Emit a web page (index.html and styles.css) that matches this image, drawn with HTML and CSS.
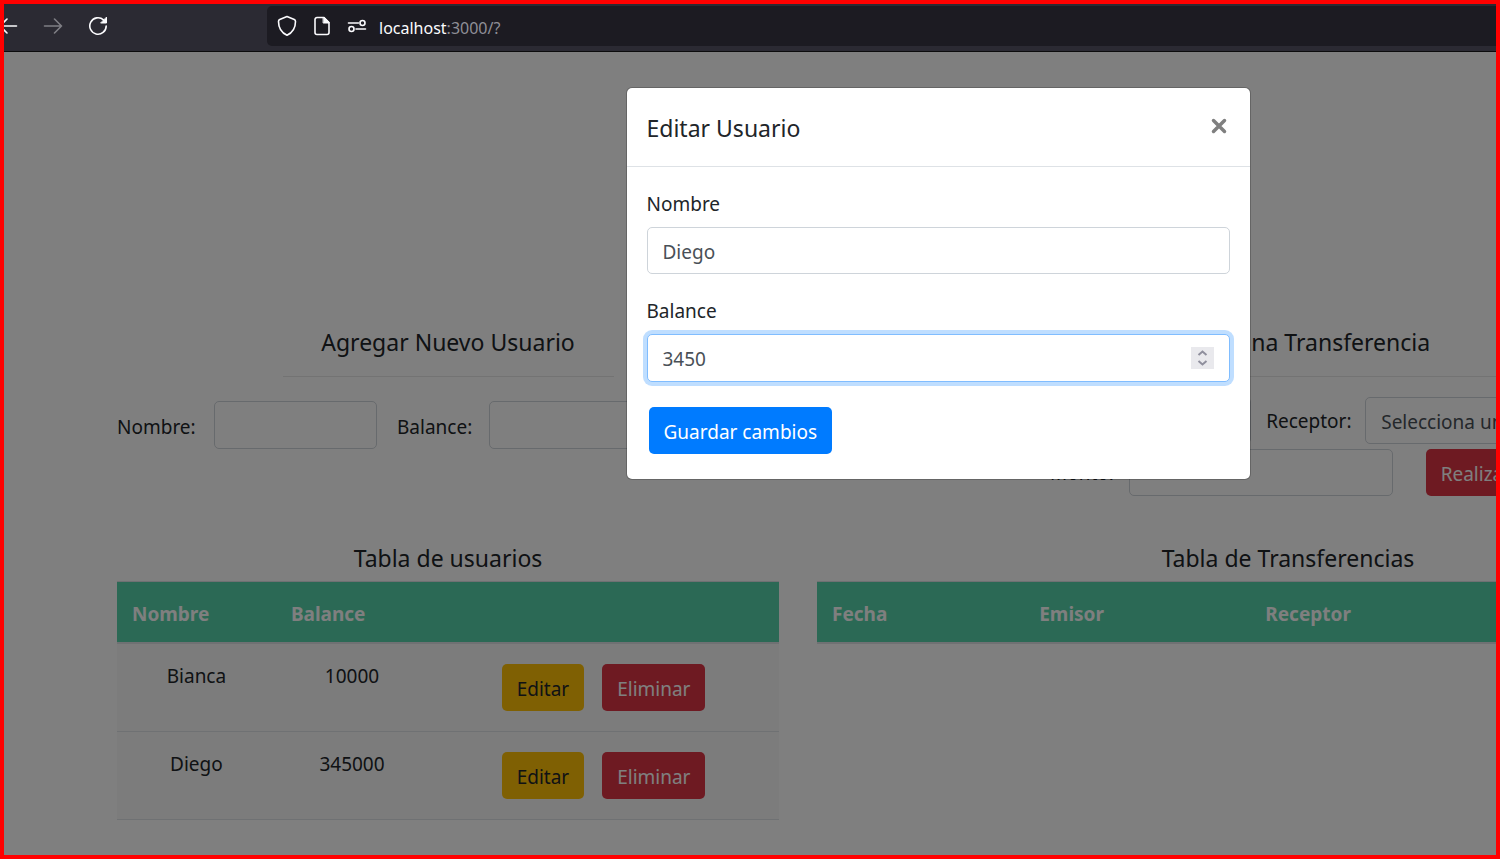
FILE: index.html
```html
<!DOCTYPE html>
<html lang="es">
<head>
<meta charset="utf-8">
<title>Usuarios y transferencias</title>
<link rel="stylesheet" href="styles.css">
</head>
<body>
<div class="window">
  <header class="toolbar">
    <nav class="nav-buttons" aria-label="Navegación">
      <button class="nav-button" type="button" aria-label="Atrás">
        <svg width="20" height="20" viewBox="0 0 20 20"><path d="M18.500 10H2M9 3l-7 7 7 7"/></svg>
      </button>
      <button class="nav-button nav-button-off" type="button" aria-label="Adelante" disabled>
        <svg width="20" height="20" viewBox="0 0 20 20"><path d="M1.500 10H18.500M11.500 3l7 7-7 7"/></svg>
      </button>
      <button class="nav-button" type="button" aria-label="Recargar">
        <svg width="20" height="20" viewBox="0 0 20 20"><path d="M18.200 10a8.200 8.200 0 1 1-2.700-6.100L17 5.500"/><path class="solid" d="M18.500 1.500v5.500h-5.500z"/></svg>
      </button>
    </nav>
    <div class="address">
      <svg width="20" height="22" viewBox="0 0 20 22"><path d="M10 1.500l7.300 3.100q1.200.5 1.200 1.800c0 6-2.700 11-8.500 13.900C4.200 17.400 1.500 12.400 1.500 6.400q0-1.300 1.200-1.800z"/></svg>
      <svg width="18" height="22" viewBox="0 0 18 22"><path d="M11 2.500H4A2 2 0 0 0 2 4.500v13a2 2 0 0 0 2 2h10a2 2 0 0 0 2-2V7.500z"/><path class="solid" d="M10.500 2.500h1L16 7v1h-5.500z"/></svg>
      <svg width="20" height="22" viewBox="0 0 20 22"><path d="M1.500 8h10M9 14h9.500"/><circle cx="15.500" cy="8" r="2.500"/><circle cx="4.500" cy="14" r="2.500"/></svg>
      <span class="url">localhost<span class="url-rest">:3000/?</span></span>
    </div>
  </header>

  <div class="viewport">
    <div class="page">
      <main class="content">
        <section>
          <h2 class="title">Agregar Nuevo Usuario</h2>
          <hr class="rule">
          <form class="user-form">
            <label for="nombre">Nombre:</label>
            <input class="field" id="nombre" type="text">
            <label for="balance">Balance:</label>
            <input class="field" id="balance" type="text">
          </form>
        </section>
        <section>
          <h2 class="title">Realizar una Transferencia</h2>
          <hr class="rule">
          <form class="transfer-form">
            <div class="transfer-row">
              <label for="emisor">Emisor:</label>
              <select class="field" id="emisor"><option>Selecciona un usuario</option></select>
              <label for="receptor">Receptor:</label>
              <select class="field" id="receptor"><option>Selecciona un usuario</option></select>
            </div>
            <div class="transfer-row transfer-row-amount">
              <label for="monto">Monto:</label>
              <input class="field" id="monto" type="text">
              <button class="btn btn-danger btn-transfer" type="button">Realizar</button>
            </div>
          </form>
        </section>
        <section>
          <h2 class="title table-title">Tabla de usuarios</h2>
          <table class="table">
            <colgroup><col class="col-name"><col class="col-balance"><col></colgroup>
            <thead>
              <tr><th>Nombre</th><th>Balance</th><th></th></tr>
            </thead>
            <tbody>
              <tr>
                <td>Bianca</td><td>10000</td>
                <td><div class="actions"><button class="btn btn-warning" type="button">Editar</button><button class="btn btn-danger" type="button">Eliminar</button></div></td>
              </tr>
              <tr>
                <td>Diego</td><td>345000</td>
                <td><div class="actions"><button class="btn btn-warning" type="button">Editar</button><button class="btn btn-danger" type="button">Eliminar</button></div></td>
              </tr>
            </tbody>
          </table>
        </section>
        <section>
          <h2 class="title table-title">Tabla de Transferencias</h2>
          <table class="table">
            <colgroup><col class="col-date"><col class="col-from"><col class="col-to"><col></colgroup>
            <thead>
              <tr><th>Fecha</th><th>Emisor</th><th>Receptor</th><th>Monto</th></tr>
            </thead>
          </table>
        </section>
      </main>

      <div class="backdrop">
        <div class="modal" role="dialog" aria-labelledby="modal-title">
          <div class="modal-header">
            <h2 class="title" id="modal-title">Editar Usuario</h2>
            <button class="close" type="button" aria-label="Cerrar">
              <svg width="16" height="16" viewBox="0 0 16 16"><path d="M2.500 2.500l11 11M13.500 2.500l-11 11"/></svg>
            </button>
          </div>
          <form class="modal-body">
            <div class="group">
              <label for="edit-nombre">Nombre</label>
              <input class="field" id="edit-nombre" type="text" value="Diego">
            </div>
            <div class="group">
              <label for="edit-balance">Balance</label>
              <div class="number">
                <input class="field field-focus" id="edit-balance" type="number" value="3450">
                <svg class="spinner" width="23" height="22" viewBox="0 0 23 22" aria-hidden="true"><path d="M7.500 8l4-3.500 4 3.500M7.500 14l4 3.500 4-3.500"/></svg>
              </div>
            </div>
            <button class="btn btn-primary" type="button">Guardar cambios</button>
          </form>
        </div>
      </div>
    </div>
  </div>
</div>
</body>
</html>
```
FILE: styles.css
```css
* { box-sizing: border-box; }

body {
  margin: 0;
  color: #212529;
  font: 19px/30px "Segoe UI", "Noto Sans", sans-serif;
}

button, input, select { font: inherit; color: inherit; }

.window {
  display: flex;
  flex-direction: column;
  height: 100vh;
  border: 4px solid #f00;
  overflow: hidden;
}

/* Browser toolbar */
.toolbar {
  display: flex;
  align-items: center;
  flex: none;
  height: 48px;
  padding-bottom: 3px;
  background: #2b2a33;
  border-bottom: 1px solid #0c0c0d;
}

.toolbar svg {
  flex: none;
  fill: none;
  stroke: #fbfbfe;
  stroke-width: 1.6;
  stroke-linecap: round;
  stroke-linejoin: round;
}

.toolbar .solid { fill: #fbfbfe; stroke-width: 1; }

.nav-buttons {
  display: flex;
  flex: none;
  gap: 25px;
  width: 263px;
}

.nav-button {
  display: flex;
  padding: 0;
  border: 0;
  background: none;
}

.nav-button:first-child { margin-left: -6px; }
.nav-button-off { opacity: 0.4; }

.address {
  display: flex;
  flex: 1;
  align-items: center;
  gap: 16px;
  height: 40px;
  padding: 0 10px;
  background: #1c1b22;
  border-radius: 5px 0 0 5px;
}

.url {
  margin-left: -4px;
  padding-top: 3px;
  color: #fbfbfe;
  font-size: 16px;
}

.url-rest { color: #8f8f97; }

/* Page; wider than the window, so its right part is cut */
.viewport {
  flex: 1;
  overflow: hidden;
  background: #fff;
}

.page {
  position: relative;
  width: calc(125% + 3px);
  height: 100%;
}

.content {
  display: grid;
  grid-template-columns: minmax(0, 662fr) minmax(0, 942fr);
  gap: 48px 38px;
  padding: 276px 113px 0;
}

.title {
  margin: 0;
  font-size: 23px;
  font-weight: 400;
  line-height: 29px;
  text-align: center;
}

.rule {
  width: 50%;
  margin: 19px auto 20px;
  border: 0;
  border-top: 1px solid #e6e6e6;
}

.field {
  width: 100%;
  height: 47px;
  padding: 2px 15px 0;
  color: #495057;
  background: #fff;
  border: 1px solid #ced4da;
  border-radius: 5px;
  outline: 0;
  appearance: none;
}

.btn {
  height: 47px;
  padding: 3px 15px 0;
  border: 0;
  border-radius: 5px;
  white-space: nowrap;
}

.btn-primary { color: #fff; background: #007bff; }
.btn-warning { color: #212529; background: #ffc107; }
.btn-danger { color: #fff; background: #dc3545; }

.user-form {
  display: grid;
  grid-template-columns: 77px 1fr 72px 1fr;
  align-items: center;
  gap: 20px;
  padding: 4px 127px 0 0;
}

.user-form label { padding-top: 3px; }
.user-form .field { height: 48px; }

.transfer-form { display: grid; gap: 5px; }

.transfer-row {
  display: grid;
  grid-template-columns: 70px 47fr 84px 53fr;
  align-items: center;
  gap: 15px;
}

.transfer-row-amount {
  grid-template-columns: 64px 28% auto;
  justify-content: center;
}

.btn-transfer { margin-left: 18px; }

.table-title { margin-bottom: 8px; }

.table {
  width: 100%;
  table-layout: fixed;
  border-collapse: separate;
  border-spacing: 0;
}

.table th {
  height: 63px;
  padding: 4px 15px 0;
  color: #fff;
  text-align: left;
  background: #56d2aa;
  border-top: 1px solid #dee2e6;
  border-bottom: 2px solid #dee2e6;
}

.table td {
  height: 88px;
  padding: 17px 15px;
  text-align: center;
  vertical-align: top;
  background: #f8f8f8;
  border-bottom: 1px solid #dee2e6;
}

.actions {
  display: flex;
  justify-content: center;
  gap: 18px;
  padding-top: 3px;
}

.col-name { width: 24%; }
.col-balance { width: 23%; }
.col-date { width: 22%; }
.col-from { width: 24%; }
.col-to { width: 32%; }

/* Edit dialog */
.backdrop {
  position: absolute;
  inset: 0;
  padding-top: 35px;
  background: rgba(0, 0, 0, 0.5);
}

.modal {
  width: 625px;
  margin: 0 auto;
  background: #fff;
  background-clip: padding-box;
  border: 1px solid rgba(0, 0, 0, 0.2);
  border-radius: 6px;
}

.modal-header {
  display: flex;
  align-items: center;
  justify-content: space-between;
  height: 79px;
  padding: 2px 23px 0 20px;
  border-bottom: 1px solid #dee2e6;
}

.close {
  display: flex;
  padding: 0 0 4px;
  border: 0;
  background: none;
}

.close svg {
  stroke: #7f7f7f;
  stroke-width: 3.5;
  stroke-linecap: round;
}

.modal-body { padding: 22px 20px 25px; }

.group { margin-bottom: 22px; }

.group label {
  display: block;
  margin-bottom: 8px;
}

.group .field { display: block; }

.number { position: relative; }

.number .field-focus {
  height: 48px;
  border-color: #80bdff;
  box-shadow: 0 0 0 4px rgba(0, 123, 255, 0.25);
  appearance: textfield;
}

.field-focus::-webkit-inner-spin-button { appearance: none; }

.spinner {
  position: absolute;
  top: 13px;
  right: 16px;
  background: #e9e9ed;
  fill: none;
  stroke: #8f8f9d;
  stroke-width: 2;
}

.modal-body .btn { margin: 3px 2px 0; }
```
